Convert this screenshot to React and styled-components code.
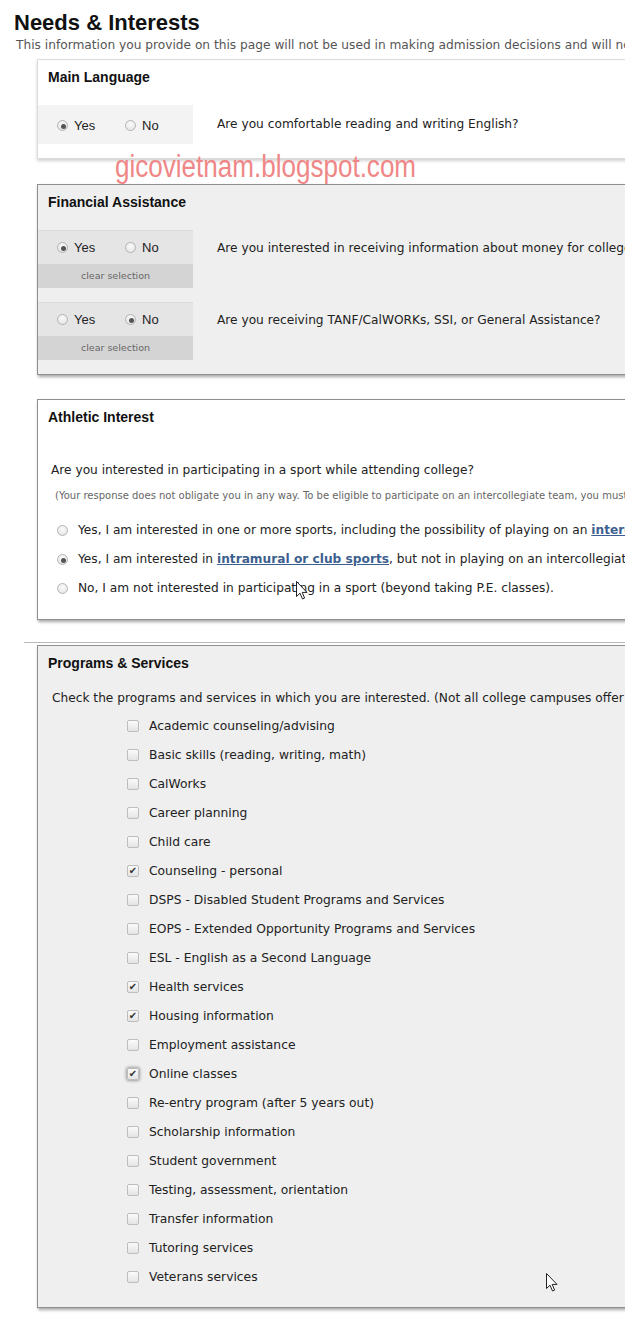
import React from 'react';
import styled, { createGlobalStyle, css } from 'styled-components';

const Global = createGlobalStyle`
    html, body {
        margin: 0;
        padding: 0;
        background: #fff;
        overflow-x: hidden;
    }
    body {
        font-family: "DejaVu Sans", Verdana, sans-serif;
        color: #222;
    }
`

const Page = styled.div`
    position: relative;
    width: 1100px;
    padding: 10px 0 12px 0;
`
const Title = styled.h1`
    margin: 0 0 0 14px;
    font-family: "Liberation Sans", Arial, sans-serif;
    font-size: 22px;
    line-height: 26px;
    font-weight: bold;
    color: #111;
`
const Intro = styled.div`
    margin: 1px 0 0 16px;
    font-size: 12.2px;
    line-height: 16px;
    color: #555;
    white-space: nowrap;
`
const Panel = styled.div`
    margin: ${p => p.$top || 0}px 0 0 37px;
    width: 1000px;
    background: ${p => p.$grey ? '#efefef' : '#fff'};
    border: 1px solid ${p => p.$light ? '#dcdcdc' : '#8f8f8f'};
    box-shadow: ${p => p.$light ? '0 2px 3px rgba(0,0,0,0.18)' : '1px 2px 3px rgba(0,0,0,0.35)'};
    padding: 8px 0 ${p => p.$bottom || 14}px 0;
`
const PanelTitle = styled.h2`
    margin: 0 0 0 10px;
    font-family: "Liberation Sans", Arial, sans-serif;
    font-size: 14px;
    line-height: 18px;
    font-weight: bold;
    color: #111;
`
const Row = styled.div`
    display: flex;
    align-items: flex-start;
    margin-top: ${p => p.$top}px;
`
const ChoiceBox = styled.div`
    width: 155px;
    flex: none;
    background: ${p => p.$dark ? '#e5e5e5' : '#f3f3f3'};
    border-top: 1px solid ${p => p.$dark ? '#dadada' : '#f3f3f3'};
`
const Choices = styled.div`
    display: flex;
    align-items: center;
    height: ${p => p.$h}px;
    padding-left: 19px;
`
const Option = styled.label`
    display: flex;
    align-items: center;
    gap: 6px;
    width: 68px;
    font-family: "Liberation Sans", Arial, sans-serif;
    font-size: 13px;
    color: #222;
`
const Clear = styled.div`
    height: 24px;
    line-height: 24px;
    background: #d4d4d4;
    text-align: center;
    font-size: 9.5px;
    color: #666;
`
const Question = styled.div`
    margin-left: 24px;
    line-height: ${p => p.$h}px;
    font-size: 12.2px;
    color: #222;
    white-space: nowrap;
`
const radioChecked = css`
    &::after {
        content: '';
        position: absolute;
        left: 3px;
        top: 3px;
        width: 5px;
        height: 5px;
        border-radius: 50%;
        background: #555;
    }
`
const Radio = styled.span`
    position: relative;
    flex: none;
    width: 11px;
    height: 11px;
    border-radius: 50%;
    border: 1px solid #b4b4b4;
    box-sizing: border-box;
    background: radial-gradient(circle at 50% 35%, #fafafa 0%, #e2e2e2 100%);
    ${p => p.$on && radioChecked}
`
const Lead = styled.div`
    margin: ${p => p.$top}px 0 0 ${p => p.$left}px;
    font-size: ${p => p.$size || 12.2}px;
    line-height: 18px;
    color: ${p => p.$muted ? '#666' : '#222'};
    white-space: nowrap;
`
const SportList = styled.div`
    display: flex;
    flex-direction: column;
    gap: 11px;
    margin: 16px 0 0 19px;
`
const SportRow = styled.div`
    display: flex;
    align-items: center;
    gap: 10px;
    height: 18px;
    font-size: 12.2px;
    color: #222;
    white-space: nowrap;
`
const Link = styled.a`
    color: #3d5f8f;
    font-weight: bold;
    text-decoration: underline;
`
const Rule = styled.div`
    margin: 22px 0 2px 24px;
    height: 1px;
    background: #b8b8b8;
`
const CheckList = styled.div`
    display: flex;
    flex-direction: column;
    gap: 11px;
    margin: 10px 0 0 89px;
`
const CheckRow = styled.label`
    display: flex;
    align-items: center;
    gap: 10px;
    height: 18px;
    font-size: 12.3px;
    color: #222;
    white-space: nowrap;
`
const Box = styled.span`
    position: relative;
    flex: none;
    width: 12px;
    height: 12px;
    box-sizing: border-box;
    border: 1px solid #bdbdbd;
    border-radius: 2px;
    background: linear-gradient(#fbfbfb, #e4e4e4);
    font-size: 10px;
    line-height: 10px;
    text-align: center;
    color: #333;
    ${p => p.$focus && css`box-shadow: 0 0 3px 1px rgba(0,0,0,0.35);`}
`
const Watermark = styled.div`
    position: absolute;
    left: 115px;
    top: 150px;
    font-family: "Liberation Sans Narrow", "Liberation Sans", Arial, sans-serif;
    font-size: 31px;
    line-height: 34px;
    color: #ef8787;
    white-space: nowrap;
    transform: scaleX(0.84);
    transform-origin: left center;
    pointer-events: none;
`
const Cursor = styled.svg`
    position: absolute;
    left: ${p => p.$x}px;
    top: ${p => p.$y}px;
`

const Pointer = ({ x, y }) => (
    <Cursor $x={x} $y={y} width="12" height="19" viewBox="0 0 12 19">
        <path d="M0.5 0.5 L0.5 15.5 L4 12.2 L6.5 18 L8.6 17.1 L6.2 11.4 L11 11.4 Z" fill="#fff" stroke="#222" strokeWidth="1" strokeLinejoin="round" />
    </Cursor>
)

const Pair = ({ yes }) => (
    <>
        <Option><Radio $on={yes} />Yes</Option>
        <Option><Radio $on={!yes} />No</Option>
    </>
)

const programs = [
    ['Academic counseling/advising'],
    ['Basic skills (reading, writing, math)'],
    ['CalWorks'],
    ['Career planning'],
    ['Child care'],
    ['Counseling - personal', true],
    ['DSPS - Disabled Student Programs and Services'],
    ['EOPS - Extended Opportunity Programs and Services'],
    ['ESL - English as a Second Language'],
    ['Health services', true],
    ['Housing information', true],
    ['Employment assistance'],
    ['Online classes', true, true],
    ['Re-entry program (after 5 years out)'],
    ['Scholarship information'],
    ['Student government'],
    ['Testing, assessment, orientation'],
    ['Transfer information'],
    ['Tutoring services'],
    ['Veterans services'],
]

const App = () => (
    <Page>
        <Global />
        <Title>Needs &amp; Interests</Title>
        <Intro>This information you provide on this page will not be used in making admission decisions and will not be shared with anyone outside the college.</Intro>

        <Panel $light $top={6}>
            <PanelTitle>Main Language</PanelTitle>
            <Row $top={19}>
                <ChoiceBox>
                    <Choices $h={38}><Pair yes /></Choices>
                </ChoiceBox>
                <Question $h={38}>Are you comfortable reading and writing English?</Question>
            </Row>
        </Panel>

        <Panel $grey $top={25}>
            <PanelTitle>Financial Assistance</PanelTitle>
            <Row $top={19}>
                <ChoiceBox $dark>
                    <Choices $h={33}><Pair yes /></Choices>
                    <Clear>clear selection</Clear>
                </ChoiceBox>
                <Question $h={36}>Are you interested in receiving information about money for college?</Question>
            </Row>
            <Row $top={14}>
                <ChoiceBox $dark>
                    <Choices $h={33}><Pair yes={false} /></Choices>
                    <Clear>clear selection</Clear>
                </ChoiceBox>
                <Question $h={36}>Are you receiving TANF/CalWORKs, SSI, or General Assistance?</Question>
            </Row>
        </Panel>

        <Panel $top={24} $bottom={22}>
            <PanelTitle>Athletic Interest</PanelTitle>
            <Lead $top={35} $left={13}>Are you interested in participating in a sport while attending college?</Lead>
            <Lead $top={8} $left={17} $size={10} $muted>(Your response does not obligate you in any way. To be eligible to participate on an intercollegiate team, you must meet eligibility requirements.)</Lead>
            <SportList>
                <SportRow><Radio /><span>Yes, I am interested in one or more sports, including the possibility of playing on an <Link>intercollegiate team</Link>.</span></SportRow>
                <SportRow><Radio $on /><span>Yes, I am interested in <Link>intramural or club sports</Link>, but not in playing on an intercollegiate team.</span></SportRow>
                <SportRow><Radio /><span>No, I am not interested in participating in a sport (beyond taking P.E. classes).</span></SportRow>
            </SportList>
        </Panel>

        <Rule />

        <Panel $grey $bottom={21}>
            <PanelTitle>Programs &amp; Services</PanelTitle>
            <Lead $top={17} $left={14}>Check the programs and services in which you are interested. (Not all college campuses offer all of the programs listed.)</Lead>
            <CheckList>
                {programs.map(([name, on, focus]) => (
                    <CheckRow key={name}>
                        <Box $focus={focus}>{on ? '✔' : ''}</Box>
                        {name}
                    </CheckRow>
                ))}
            </CheckList>
        </Panel>

        <Watermark>gicovietnam.blogspot.com</Watermark>
        <Pointer x={296} y={581} />
        <Pointer x={546} y={1273} />
    </Page>
)

export default App;
